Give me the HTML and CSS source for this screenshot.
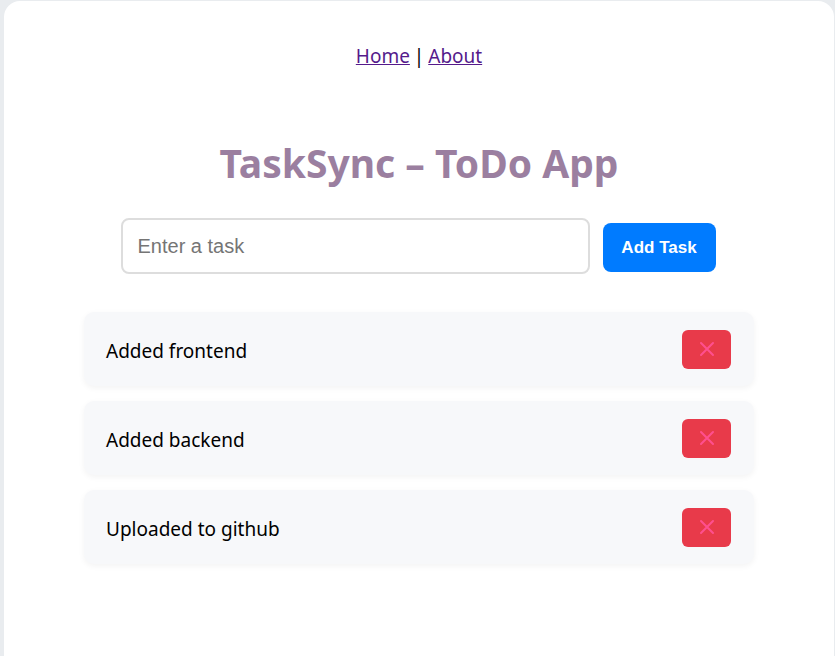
FILE: index.html
```html
<!DOCTYPE html>
<html>
<head>
<meta charset="utf-8">
<link rel="stylesheet" href="styles.css">
</head>
<body>
<div class="card">
  <nav class="nav"><a href="#home" class="link">Home</a> | <a href="#about" class="link">About</a></nav>
  <h1 class="title">TaskSync – ToDo App</h1>
  <form class="add-form">
    <input class="task-input" type="text" placeholder="Enter a task">
    <button class="add-btn" type="button">Add Task</button>
  </form>
  <ul class="task-list">
    <li class="task"><span class="task-text">Added frontend</span><button class="del-btn" type="button"><svg class="x-icon" viewBox="0 0 16 16" width="16" height="16"><path d="M2 2 L14 14 M14 2 L2 14"/></svg></button></li>
    <li class="task"><span class="task-text">Added backend</span><button class="del-btn" type="button"><svg class="x-icon" viewBox="0 0 16 16" width="16" height="16"><path d="M2 2 L14 14 M14 2 L2 14"/></svg></button></li>
    <li class="task"><span class="task-text">Uploaded to github</span><button class="del-btn" type="button"><svg class="x-icon" viewBox="0 0 16 16" width="16" height="16"><path d="M2 2 L14 14 M14 2 L2 14"/></svg></button></li>
  </ul>
</div>
</body>
</html>
```

FILE: styles.css
```css
html, body {
  margin: 0;
  height: 100%;
}
body {
  background: #e9ecef;
  padding: 1px 1px 0 4px;
  box-sizing: border-box;
  font-family: "Noto Sans", "Open Sans", sans-serif;
  overflow: hidden;
}
.card {
  background: #fff;
  border-radius: 16px 16px 0 0;
  height: 100%;
  box-sizing: border-box;
  display: flex;
  flex-direction: column;
  align-items: center;
  padding-top: 42px;
}
.nav {
  font-size: 19px;
  line-height: 26px;
  color: #000;
  word-spacing: -1px;
}
.link {
  color: #551a8b;
}
.title {
  margin: 67px 0 0;
  font-size: 39px;
  line-height: 54px;
  font-weight: 700;
  color: #9b7fa0;
}
.add-form {
  display: flex;
  align-items: flex-start;
  gap: 13px;
  margin-top: 28px;
  margin-right: 2px;
}
.task-input {
  width: 469px;
  height: 56px;
  box-sizing: border-box;
  border: 2px solid #ddd;
  border-radius: 8px;
  padding: 0 15px;
  font-family: "Liberation Sans", Arial, sans-serif;
  font-size: 20px;
  outline: none;
}
.task-input::placeholder {
  color: #757575;
}
.add-btn {
  width: 113px;
  height: 49px;
  margin-top: 5px;
  border: none;
  border-radius: 8px;
  background: #007bff;
  color: #fff;
  font-family: "Liberation Sans", Arial, sans-serif;
  font-weight: 700;
  font-size: 17px;
}
.task-list {
  list-style: none;
  margin: 38px 0 0;
  padding: 0;
  width: 670px;
  display: flex;
  flex-direction: column;
  gap: 15px;
}
.task {
  height: 74px;
  box-sizing: border-box;
  background: #f7f8fa;
  border-radius: 10px;
  box-shadow: 0 2px 6px rgba(0,0,0,0.05);
  display: flex;
  align-items: center;
  justify-content: space-between;
  padding: 0 23px 0 22px;
}
.task-text {
  font-size: 19px;
  color: #000;
  padding-top: 3px;
}
.del-btn {
  width: 49px;
  height: 39px;
  border: none;
  border-radius: 6px;
  background: #e83a4a;
  display: flex;
  align-items: center;
  justify-content: center;
  padding: 0;
}
.x-icon path {
  stroke: #ff4f8e;
  stroke-width: 2;
  fill: none;
  stroke-linecap: round;
}
```
